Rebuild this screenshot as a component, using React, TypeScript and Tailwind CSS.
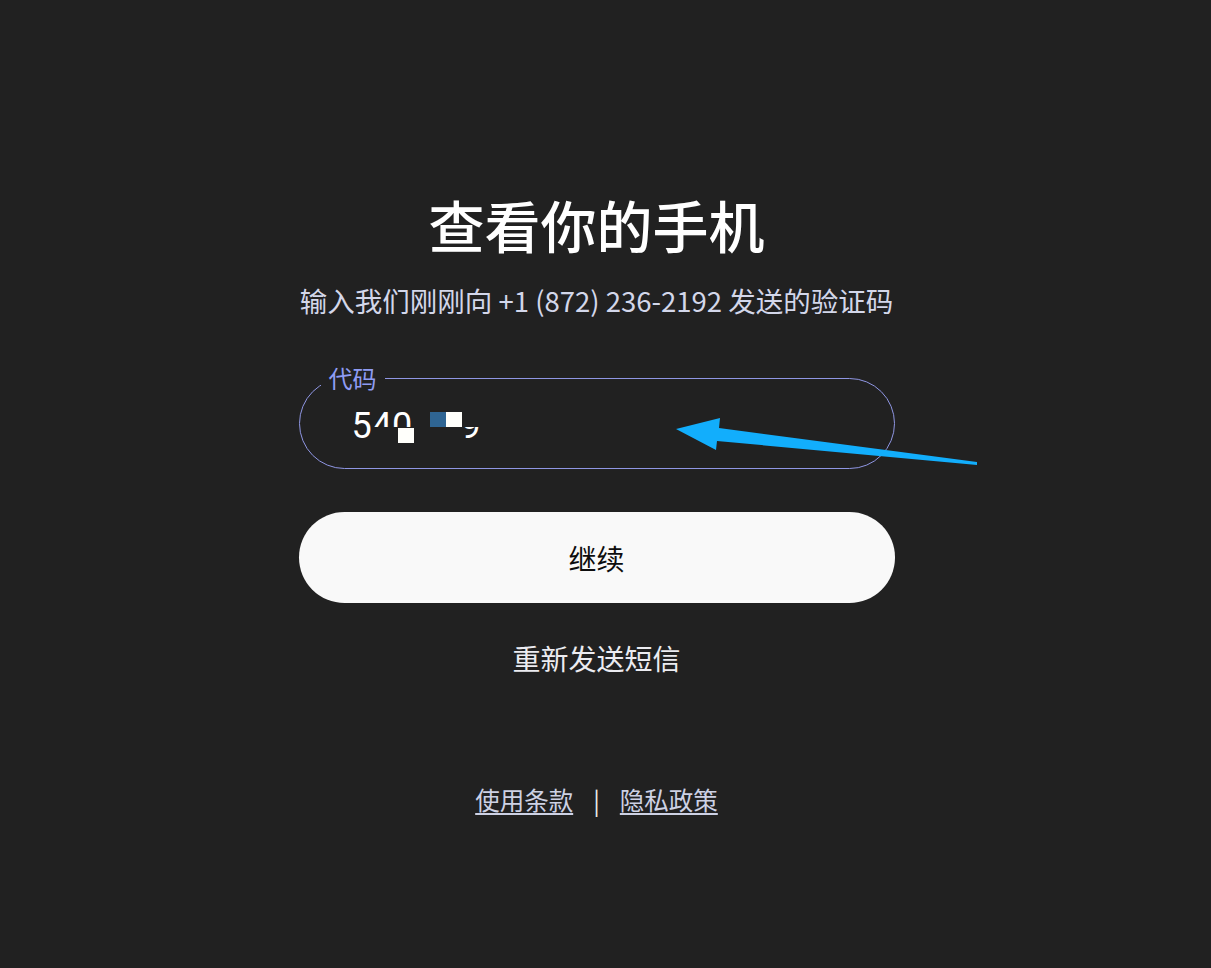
import React from 'react';

const cjk = '"Noto Sans CJK SC", "Noto Sans", sans-serif';

const CodeField: React.FC = () => {
  return (
    <div className="relative w-full h-[91px] rounded-full border border-[#8f96e3] flex items-center pl-[52px]">
      {/* 浮动标签 */}
      <span
        className="absolute left-[21px] -top-[19px] px-[8px] bg-[#212121] text-[24px] leading-[36px] text-[#8f9cf3]"
        style={{ fontFamily: cjk }}
      >
        代码
      </span>

      {/* 被打码的验证码 */}
      <div
        className="relative mt-[4px] h-[46px] w-[140px] text-[36px] leading-[46px] text-white"
        style={{ fontFamily: 'Roboto, "Liberation Sans", sans-serif' }}
      >
        <span>540</span>
        <span className="absolute left-[19px] top-[24px] w-[44px] h-[22px] bg-[#212121]" />
        <span className="absolute left-[109px] top-0">9</span>
        <span className="absolute left-[106px] top-0 w-[26px] h-[24px] bg-[#212121]" />
        <span className="absolute left-[46px] top-[25px] w-[16px] h-[15px] bg-[#fffffb]" />
        <span className="absolute left-[78px] top-[9px] w-[16px] h-[15px] bg-[#2f6593]" />
        <span className="absolute left-[94px] top-[9px] w-[16px] h-[15px] bg-[#fffffb]" />
      </div>
    </div>
  );
};

const Arrow: React.FC = () => (
  <svg
    className="absolute left-0 top-0 pointer-events-none"
    width="1211"
    height="968"
    viewBox="0 0 1211 968"
  >
    <polygon
      points="676,429 720,418 719,428 977,462 977,465 717,441 716,450"
      fill="#12aefc"
    />
  </svg>
);

export default function App() {
  return (
    <div
      className="relative w-full min-h-[968px] bg-[#212121] flex flex-col items-center pr-[18px]"
      style={{ fontFamily: cjk }}
    >
      <div className="w-[596px] flex flex-col items-center pt-[190px]">
        <h1 className="text-[56px] leading-[68px] font-medium text-white">查看你的手机</h1>
        <p className="mt-[24px] text-[27.5px] leading-[36px] text-[#d3d7ea] whitespace-nowrap">
          输入我们刚刚向 +1 (872) 236-2192 发送的验证码
        </p>

        <div className="mt-[60px] w-full">
          <CodeField />
        </div>

        <button className="mt-[43px] w-full h-[91px] rounded-full bg-[#f9f9f9] text-[28px] text-[#0d0d0d]">
          继续
        </button>

        <button className="mt-[37px] text-[28px] leading-[36px] text-[#ececf1]">重新发送短信</button>

        <div className="mt-[108px] flex items-center gap-[20px] text-[24.5px] leading-[32px] text-[#cdd1e4]">
          <a className="underline underline-offset-[3px]">使用条款</a>
          <span className="text-[#ececec]">|</span>
          <a className="underline underline-offset-[3px]">隐私政策</a>
        </div>
      </div>

      <Arrow />
    </div>
  );
}
